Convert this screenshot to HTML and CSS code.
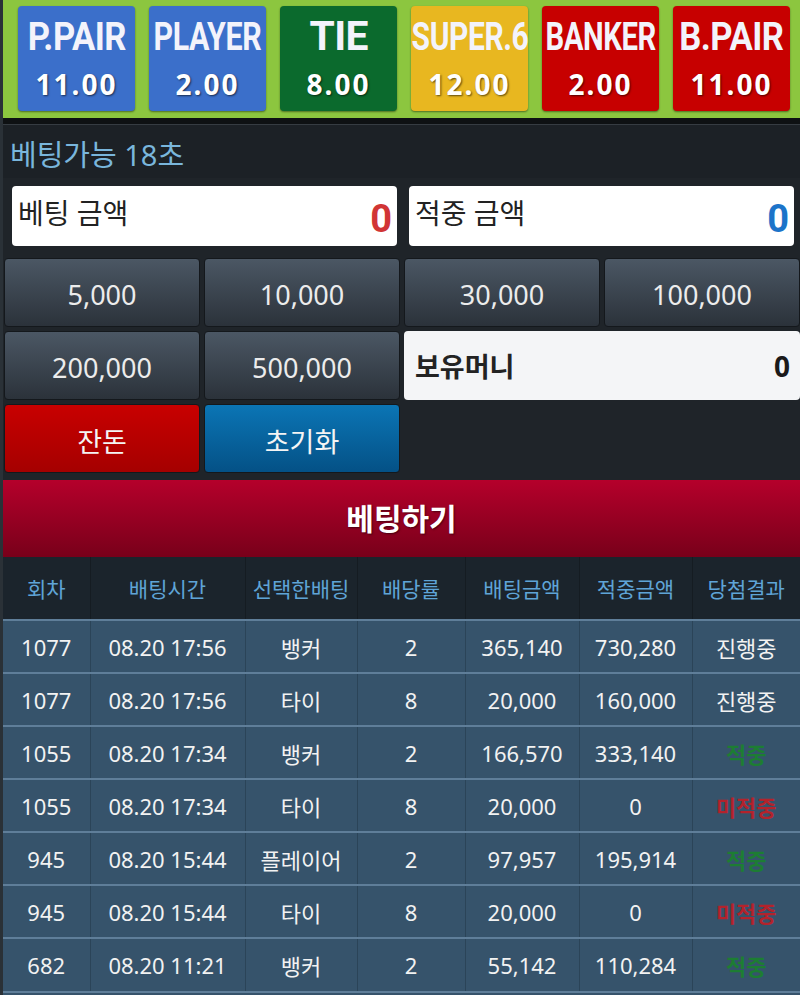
FILE: index.html
```html
<!DOCTYPE html>
<html lang="ko">
<head>
<meta charset="utf-8">
<title>베팅</title>
<link rel="stylesheet" href="styles.css">
</head>
<body>
<div class="page">
  <div class="bets">
    <div class="bet bet-blue"><span class="lbl lbl-ppair">P.PAIR</span><span class="odd">11.00</span></div>
    <div class="bet bet-blue"><span class="lbl lbl-player">PLAYER</span><span class="odd">2.00</span></div>
    <div class="bet bet-green"><span class="lbl lbl-tie">TIE</span><span class="odd">8.00</span></div>
    <div class="bet bet-yellow"><span class="lbl lbl-super">SUPER.6</span><span class="odd">12.00</span></div>
    <div class="bet bet-red"><span class="lbl lbl-banker">BANKER</span><span class="odd">2.00</span></div>
    <div class="bet bet-red"><span class="lbl lbl-bpair">B.PAIR</span><span class="odd">11.00</span></div>
  </div>

  <div class="timer">베팅가능 18초</div>

  <div class="lower">
    <div class="amounts">
      <div class="amt"><span class="amt-label">베팅 금액</span><span class="amt-val val-red">0</span></div>
      <div class="amt"><span class="amt-label">적중 금액</span><span class="amt-val val-blue">0</span></div>
    </div>
    <div class="chips">
      <div class="chip">5,000</div>
      <div class="chip">10,000</div>
      <div class="chip">30,000</div>
      <div class="chip">100,000</div>
      <div class="chip">200,000</div>
      <div class="chip">500,000</div>
      <div class="money"><span class="money-label">보유머니</span><span class="money-val">0</span></div>
      <div class="chip chip-change">잔돈</div>
      <div class="chip chip-reset">초기화</div>
    </div>
  </div>

  <div class="betbar">베팅하기</div>

  <table class="hist">
    <colgroup>
      <col class="c1"><col class="c2"><col class="c3"><col class="c4"><col class="c5"><col class="c6"><col class="c7">
    </colgroup>
    <thead>
      <tr><th>회차</th><th>배팅시간</th><th>선택한배팅</th><th>배당률</th><th>배팅금액</th><th>적중금액</th><th>당첨결과</th></tr>
    </thead>
    <tbody>
      <tr><td>1077</td><td>08.20 17:56</td><td>뱅커</td><td>2</td><td>365,140</td><td>730,280</td><td>진행중</td></tr>
      <tr><td>1077</td><td>08.20 17:56</td><td>타이</td><td>8</td><td>20,000</td><td>160,000</td><td>진행중</td></tr>
      <tr><td>1055</td><td>08.20 17:34</td><td>뱅커</td><td>2</td><td>166,570</td><td>333,140</td><td class="win">적중</td></tr>
      <tr><td>1055</td><td>08.20 17:34</td><td>타이</td><td>8</td><td>20,000</td><td>0</td><td class="lose">미적중</td></tr>
      <tr><td>945</td><td>08.20 15:44</td><td>플레이어</td><td>2</td><td>97,957</td><td>195,914</td><td class="win">적중</td></tr>
      <tr><td>945</td><td>08.20 15:44</td><td>타이</td><td>8</td><td>20,000</td><td>0</td><td class="lose">미적중</td></tr>
      <tr><td>682</td><td>08.20 11:21</td><td>뱅커</td><td>2</td><td>55,142</td><td>110,284</td><td class="win">적중</td></tr>
    </tbody>
  </table>
  <div class="hist-tail"></div>
</div>
</body>
</html>
```

FILE: styles.css
```css
* { box-sizing: border-box; }

body {
  margin: 0;
  background: #2a3137;
  font-family: "Noto Sans", "Noto Sans CJK KR", sans-serif;
}

.page {
  margin-left: 3px;
  width: 797px;
}

/* ---- bet type buttons ---- */
.bets {
  display: flex;
  gap: 14px;
  padding: 6px 10px 7px 15px;
  background: #8cc63f;
  border-bottom: 6px solid #0e1113;
}

.bet {
  flex: 0 0 117px;
  min-width: 0;
  height: 105px;
  border-radius: 4px;
  display: flex;
  flex-direction: column;
  align-items: center;
  box-shadow: 0 1px 2px rgba(0, 0, 0, 0.45);
}

.bet-blue { background: #3b6fca; }
.bet-green { background: #0b6a2d; }
.bet-yellow { background: #e8b720; }
.bet-red { background: #c70000; }

.lbl {
  display: block;
  margin-top: 12px;
  font-family: Roboto, "Noto Sans", sans-serif;
  font-weight: 700;
  font-size: 38px;
  line-height: 38px;
  color: #f3f3fb;
  white-space: nowrap;
  letter-spacing: -0.5px;
}

.lbl-ppair { transform: scaleX(0.91); }
.lbl-player { transform: scaleX(0.8); }
.lbl-tie { transform: scaleX(1.02); font-size: 40px; }
.lbl-super { transform: scaleX(0.79); }
.lbl-banker { transform: scaleX(0.77); }
.lbl-bpair { transform: scaleX(0.91); }

.odd {
  display: block;
  margin-top: 13px;
  font-weight: 700;
  font-size: 28px;
  line-height: 30px;
  letter-spacing: 2px;
  color: #ffffff;
  text-shadow: 1px 1px 2px rgba(0, 0, 0, 0.6);
}

/* ---- timer ---- */
.timer {
  height: 54px;
  padding: 5px 0 0 7px;
  background: #1c2126;
  border-top: 1px solid #363c42;
  color: #79b6dc;
  font-size: 29px;
  line-height: 49px;
}

/* ---- amounts & chips ---- */
.lower {
  background: #1f2429;
  padding: 8px 0 7px 1px;
}

.amounts {
  display: flex;
  gap: 12px;
  padding: 0 6px 0 8px;
}

.amt {
  flex: 1;
  height: 60px;
  background: #ffffff;
  border-radius: 4px;
  display: flex;
  justify-content: space-between;
  align-items: center;
  padding: 0 5px 0 6px;
}

.amt-label {
  font-size: 28px;
  color: #222222;
  line-height: 1;
  margin-top: -6px;
}

.amt-val {
  font-family: Roboto, "Noto Sans", sans-serif;
  font-weight: 700;
  font-size: 38px;
  line-height: 1;
  margin-top: 6px;
}

.val-red { color: #d13535; }
.val-blue { color: #1c74c9; }

.chips {
  margin-top: 12px;
  display: grid;
  grid-template-columns: repeat(4, 1fr);
  grid-auto-rows: 69px;
  gap: 4px;
}

.chip {
  display: flex;
  align-items: center;
  justify-content: center;
  border-radius: 4px;
  border: 1px solid #14181c;
  background: linear-gradient(#4b5764, #2b323a);
  color: #ececec;
  font-size: 27px;
  padding-top: 3px;
}

.chip-change { background: linear-gradient(#c80000, #a50000); color: #f4f4f4; }
.chip-reset { background: linear-gradient(#0b75b5, #045186); color: #f4f4f4; }

.money {
  grid-column: span 2;
  display: flex;
  justify-content: space-between;
  align-items: center;
  background: #f4f5f7;
  border-radius: 4px;
  padding: 0 10px 0 11px;
}

.money-label {
  font-weight: 700;
  font-size: 27px;
  color: #232323;
}

.money-val {
  font-weight: 700;
  font-size: 28px;
  color: #1a1a1a;
}

/* ---- bet bar ---- */
.betbar {
  height: 77px;
  line-height: 77px;
  text-align: center;
  background: linear-gradient(#b5002b, #78001a);
  color: #ffffff;
  font-weight: 700;
  font-size: 30px;
  text-shadow: 1px 1px 2px rgba(0, 0, 0, 0.5);
}

/* ---- history table ---- */
.hist {
  width: 797px;
  border-collapse: collapse;
  table-layout: fixed;
}

.c1 { width: 87px; }
.c2 { width: 155px; }
.c3 { width: 112px; }
.c4 { width: 108px; }
.c5 { width: 114px; }
.c6 { width: 113px; }
.c7 { width: 108px; }

.hist th {
  height: 63px;
  background: #1b242c;
  color: #5fa4d7;
  font-weight: 400;
  font-size: 21px;
  border-right: 1px solid #151c22;
  padding: 0;
}

.hist td {
  height: 53px;
  padding: 0;
  background: #36536b;
  border-top: 2px solid #5f7e99;
  border-right: 1px solid #2b4458;
  color: #f2f2f2;
  font-size: 22px;
  text-align: center;
}

.hist th:last-child,
.hist td:last-child { border-right: none; }

.hist td.win { color: #1d7d33; font-weight: 700; }
.hist td.lose { color: #b3232c; font-weight: 700; }

.hist-tail {
  height: 20px;
  background: #36536b;
  border-top: 2px solid #5f7e99;
}
```
